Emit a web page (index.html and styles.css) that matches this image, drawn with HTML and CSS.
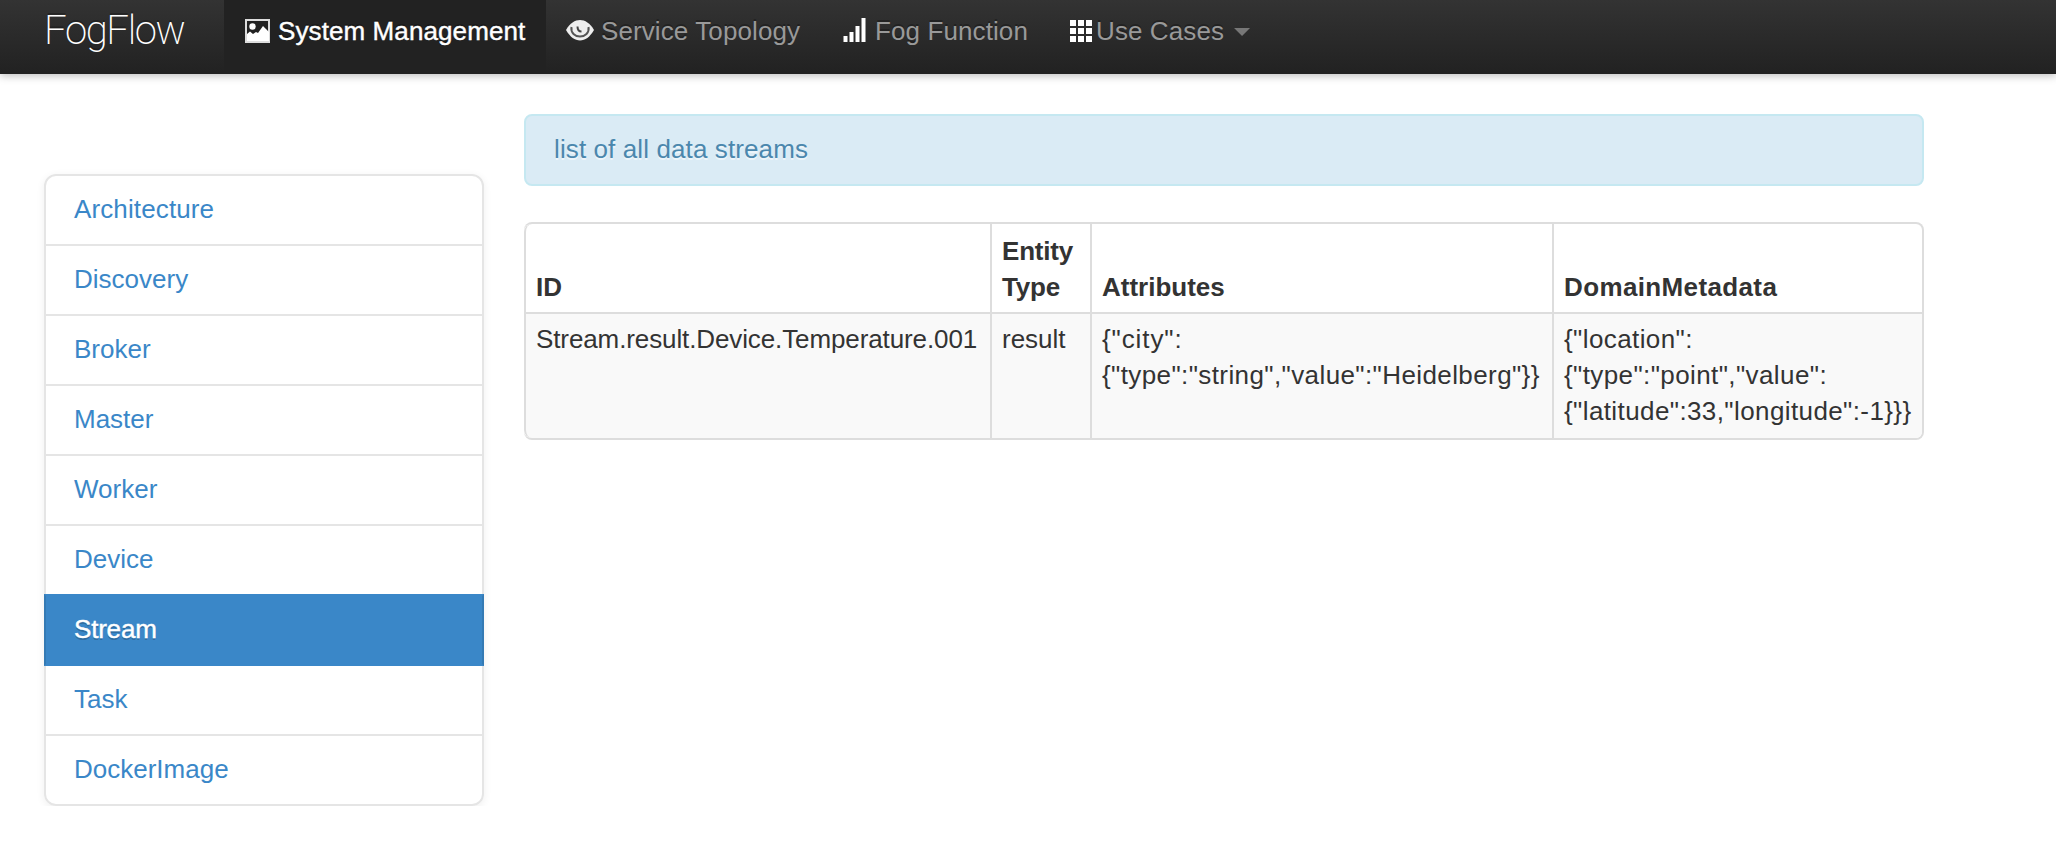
FILE: index.html
```html
<!DOCTYPE html>
<html lang="en">
<head>
<meta charset="utf-8">
<title>FogFlow</title>
<link rel="stylesheet" href="styles.css">
</head>
<body>
<header class="navbar">
  <a class="brand">FogFlow</a>
  <nav class="nav">
    <a class="nav-item nav-system active">
      <svg class="icon" width="26" height="24" viewBox="0 0 26 24"><rect x="1" y="1" width="23" height="22" fill="#222" stroke="#ddd" stroke-width="2"/><path d="M2 22V15l3-2.500 3 2.500 3-2 2 1L18 7l3 3 3 3v9z" fill="#fff"/><circle cx="7.500" cy="7.500" r="3.200" fill="#fff"/></svg>
      <span>System Management</span>
    </a>
    <a class="nav-item nav-topology">
      <svg class="icon" width="28" height="24" viewBox="0 0 28 24"><path d="M0 11C4 4 9 1 14 1s10 3 14 10c-4 7-9 10.500-14 10.500S4 18 0 11z" fill="#eee"/><path d="M5.500 8C4.500 14 9 17.500 14 17.500S23.500 14 22.500 8" fill="none" stroke="#555" stroke-width="2"/><path d="M11.500 7.500c0 3.500 1 5 4 5" fill="none" stroke="#444" stroke-width="2"/></svg>
      <span>Service Topology</span>
    </a>
    <a class="nav-item nav-function">
      <svg class="icon" width="24" height="26" viewBox="0 0 24 26"><path d="M.5 19h4v6h-4zM6.500 15h4v10h-4zM12.500 9h4v16h-4zM18.500 1h4v24h-4z" fill="#fff"/></svg>
      <span>Fog Function</span>
    </a>
    <a class="nav-item nav-cases">
      <svg class="icon" width="24" height="24" viewBox="0 0 24 24"><path d="M1 1h6v6H1zM9 1h6v6H9zM17 1h6v6h-6zM1 9h6v6H1zM9 9h6v6H9zM17 9h6v6h-6zM1 17h6v6H1zM9 17h6v6H9zM17 17h6v6h-6z" fill="#fff"/></svg>
      <span>Use Cases</span>
      <i class="caret"></i>
    </a>
  </nav>
</header>
<div class="layout">
  <nav class="sidebar">
    <a class="side-link">Architecture</a>
    <a class="side-link">Discovery</a>
    <a class="side-link">Broker</a>
    <a class="side-link">Master</a>
    <a class="side-link">Worker</a>
    <a class="side-link">Device</a>
    <a class="side-link current">Stream</a>
    <a class="side-link">Task</a>
    <a class="side-link">DockerImage</a>
  </nav>
  <main class="content">
    <div class="alert">list of all data streams</div>
    <table class="streams">
      <colgroup><col class="col-id"><col class="col-type"><col class="col-attr"><col class="col-meta"></colgroup>
      <thead>
        <tr><th>ID</th><th class="head-type">Entity<br>Type</th><th>Attributes</th><th class="head-meta">DomainMetadata</th></tr>
      </thead>
      <tbody>
        <tr>
          <td class="cell-id">Stream.result.Device.Temperature.001</td>
          <td>result</td>
          <td class="json"><span class="json-key">{"city":</span><br>{"type":"string","value":"Heidelberg"}}</td>
          <td class="json">{"location":<br>{"type":"point","value":<br>{"latitude":33,"longitude":-1}}}</td>
        </tr>
      </tbody>
    </table>
  </main>
</div>
</body>
</html>
```
FILE: styles.css
```css
* { box-sizing: border-box; }
body {
  margin: 0;
  background: #fff;
  color: #333;
  font: 26px/36px "Liberation Sans", Arial, sans-serif;
}
.navbar {
  display: flex;
  height: 74px;
  padding-left: 44px;
  background: linear-gradient(#333, #222);
  border-bottom: 2px solid #222;
  box-shadow: 0 2px 8px rgba(0, 0, 0, .25);
  color: #999;
  letter-spacing: .1px;
  text-shadow: 0 -2px 0 rgba(0, 0, 0, .25);
}
.brand {
  width: 180px;
  padding-top: 11px;
  font: 200 40px/40px Roboto, sans-serif;
  letter-spacing: -1.4px;
  color: #fff;
}
.nav { display: flex; }
.nav-item {
  display: flex;
  padding: 13px 0 0 20px;
  white-space: nowrap;
}
.icon { flex: none; margin-top: 6px; }
.nav-system { width: 322px; padding-left: 21px; gap: 7px; }
.nav-topology { width: 277px; gap: 7px; }
.nav-function { width: 226px; gap: 8px; }
.nav-function .icon { margin-top: 4px; }
.nav-cases { gap: 3px; }
.active {
  background: #222;
  color: #fff;
  -webkit-text-stroke: .4px #fff;
}
.caret {
  width: 16px;
  height: 8px;
  margin: 15px 0 0 7px;
  background: #777;
  clip-path: polygon(0 0, 100% 0, 50% 100%);
}
.layout {
  display: flex;
  gap: 40px;
  padding: 40px 0 0 44px;
}
.sidebar {
  width: 440px;
  margin-top: 60px;
  border-radius: 12px;
  box-shadow: 0 2px 8px rgba(0, 0, 0, .065);
}
.side-link {
  display: block;
  height: 72px;
  margin-bottom: -2px;
  padding: 15px 28px 17px;
  border: 2px solid #e5e5e5;
  color: #3a87c8;
}
.side-link:first-child { border-radius: 12px 12px 0 0; letter-spacing: .12px; }
.side-link:last-child { border-radius: 0 0 12px 12px; margin-bottom: 0; }
.current {
  position: relative;
  background: #3a87c8;
  border-color: #3a87c8;
  border-left-color: #347ab4;
  border-right-color: #347ab4;
  color: #fff;
  letter-spacing: -.2px;
  text-shadow: 0 2px 0 rgba(0, 0, 0, .2);
  -webkit-text-stroke: .4px #fff;
}
.content { width: 1400px; }
.alert {
  height: 72px;
  margin-bottom: 36px;
  padding: 15px 28px 17px;
  border: 2px solid #c5e8f1;
  border-radius: 8px;
  background: #daebf5;
  color: #4b87ad;
  letter-spacing: .11px;
  text-shadow: 0 2px 0 rgba(255, 255, 255, .5);
}
.streams {
  width: 1400px;
  table-layout: fixed;
  border: 2px solid #ddd;
  border-left: 0;
  border-spacing: 0;
  border-radius: 8px;
  overflow: hidden;
}
.col-id { width: 466px; }
.col-type { width: 100px; }
.col-attr { width: 462px; }
.streams th, .streams td {
  padding: 7px 0 9px 10px;
  border-left: 2px solid #ddd;
  text-align: left;
  white-space: nowrap;
}
.streams th { padding: 9px 0 7px 10px; vertical-align: bottom; }
.streams td { vertical-align: top; border-top: 2px solid #ddd; background: #f9f9f9; }
.streams .head-type { letter-spacing: -.2px; }
.streams .head-meta { letter-spacing: .37px; }
.cell-id { letter-spacing: -.11px; }
.json { letter-spacing: .4px; }
.json-key { letter-spacing: .9px; }
.streams tr > :first-child { border-radius: 8px 0 0 0; }
.streams tbody tr > :first-child { border-radius: 0 0 0 8px; }
```
